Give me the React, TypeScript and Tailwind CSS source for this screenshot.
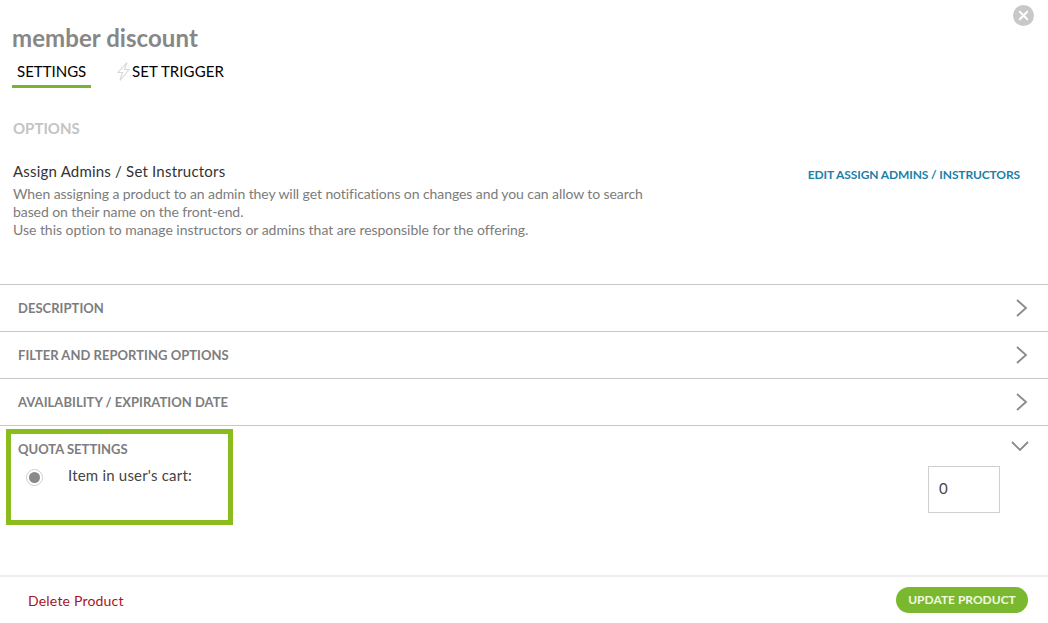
import { X } from 'lucide-react';

const SECTIONS = ['DESCRIPTION', 'FILTER AND REPORTING OPTIONS', 'AVAILABILITY / EXPIRATION DATE'];

function Chevron({ open }: { open?: boolean }) {
  return (
    <svg width="18" height="18" viewBox="0 0 18 18" fill="none" stroke="#8a8a8a" strokeWidth="1.8">
      {open ? <path d="M1 4l8 8 8-8" /> : <path d="M4 1l9 8-9 8" />}
    </svg>
  );
}

export default function App() {
  return (
    <div className="relative flex h-[623px] w-[1048px] flex-col overflow-hidden bg-white font-['Lato','Noto_Sans',sans-serif]">
      <header className="flex flex-col items-start pl-3 pt-[23px]">
        <h1 className="text-[24px] leading-[30px] font-bold tracking-[0.06px] text-[#878787]">member discount</h1>
        <nav className="mt-[7px] flex items-start text-[15px] leading-[22px] text-black">
          <div className="w-[79px] border-b-[3px] border-[#7ab42f] pb-[3px] pl-[5px]">SETTINGS</div>
          <div className="ml-[25px] flex items-center">
            <svg width="15" height="19" viewBox="0 0 15 19" fill="none" stroke="#d8d8d8" strokeWidth="1.1">
              <path d="M11 0.5L2 10.5h4.5l-2.5 8 9-11H8.5l2.5-7z" />
            </svg>
            <span className="ml-px tracking-[0.08px]">SET TRIGGER</span>
          </div>
        </nav>
      </header>

      <section className="pl-[13px] pr-7 pt-[29px]">
        <h2 className="text-[15px] leading-[22px] font-bold text-[#c4c4c4]">OPTIONS</h2>
        <div className="mt-[21px] flex items-start justify-between">
          <div className="w-[640px]">
            <h3 className="text-[15px] leading-[22px] tracking-[0.2px] text-[#333]">Assign Admins / Set Instructors</h3>
            <p className="mt-[3px] text-[14px] leading-[18px] tracking-[-0.03px] text-[#7c7c7c]">
              <span className="tracking-[-0.08px]">When assigning a product to an admin they will get notifications on changes and you can allow to search based on their name on the front-end.</span>
              <br />
              Use this option to manage instructors or admins that are responsible for the offering.
            </p>
          </div>
          <a className="mt-[6px] text-[12px] leading-[18px] font-bold tracking-[-0.12px] text-[#1b7fa8]">EDIT ASSIGN ADMINS / INSTRUCTORS</a>
        </div>
      </section>

      <div className="mt-[45px]">
        {SECTIONS.map(title => (
          <div key={title} className="flex h-[47px] items-center justify-between border-t border-[#c8c8c8] pl-[18px] pr-[17px]">
            <span className="mt-[2px] text-[13px] font-bold tracking-[0.03px] text-[#7d7d7d]">{title}</span>
            <Chevron />
          </div>
        ))}
        <div className="h-[150px] border-t border-[#c8c8c8] pl-[18px] pr-[19px]">
          <div className="flex items-start justify-between pt-[11px]">
            <span className="text-[13px] leading-[24px] font-bold text-[#7d7d7d]">QUOTA SETTINGS</span>
            <div className="mt-[1px]">
              <Chevron open />
            </div>
          </div>
          <div className="flex items-start justify-between">
            <label className="mt-[3px] flex items-start pl-[8px] text-[15px] leading-[22px] tracking-[0.2px] text-[#444]">
              <span className="mt-[5px] flex h-[17px] w-[17px] items-center justify-center rounded-full border border-[#d0d0d0]">
                <span className="h-[11px] w-[11px] rounded-full bg-[#8a8a8a]" />
              </span>
              <span className="ml-[25px]">Item in user's cart:</span>
            </label>
            <input
              readOnly
              value="0"
              className="mr-[29px] mt-[5px] h-[47px] w-[72px] border border-[#cfcfcf] pb-[4px] pl-[10px] text-[15px] text-[#444] outline-none"
            />
          </div>
        </div>
      </div>

      <footer className="flex h-[47px] items-center justify-between border-t-2 border-[#eeeeee] pl-7 pr-5">
        <a className="mt-[2px] text-[14px] tracking-[0.2px] text-[#a8131f]">Delete Product</a>
        <button className="h-[26px] w-[132px] rounded-full bg-[#7ab92f] pt-[1px] text-[12px] font-bold text-[#f2f8e4]">UPDATE PRODUCT</button>
      </footer>

      {/* close button and the green annotation sit over the page */}
      <button className="absolute left-[1013px] top-[5px] flex h-[21px] w-[21px] items-center justify-center rounded-full bg-[#c8c8c8]">
        <X size={15} strokeWidth={3} color="#ffffff" />
      </button>
      <div className="pointer-events-none absolute left-[6px] top-[429px] h-[96px] w-[227px] border-[5px] border-[#8abc1e]" />
    </div>
  );
}
